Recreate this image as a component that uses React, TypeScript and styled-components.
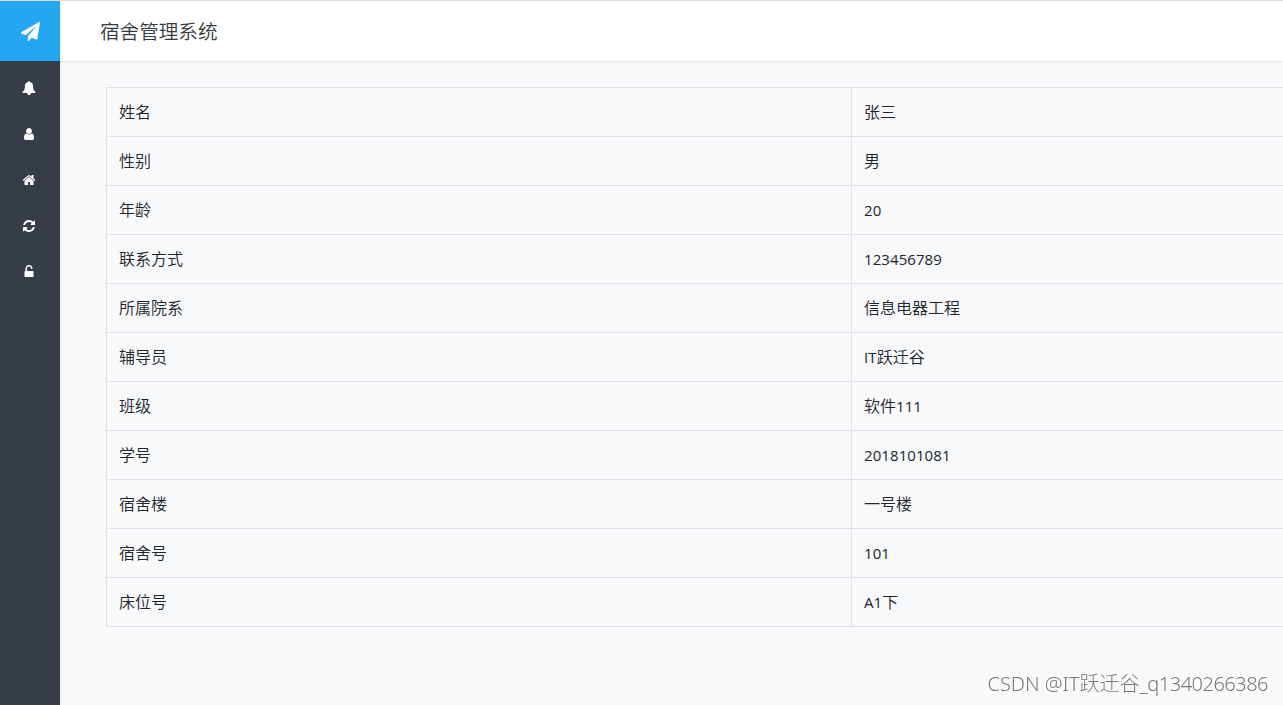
import React from "react";
import styled, { createGlobalStyle } from "styled-components";

const GlobalStyle = createGlobalStyle`
  *, *::before, *::after { box-sizing: border-box; }
  html, body { margin: 0; padding: 0; overflow: hidden; }
  body {
    background: #f9f9f9;
    color: #212529;
    font-family: "Noto Sans", "Noto Sans CJK SC", sans-serif;
    font-size: 16px;
    line-height: 24px;
  }
`;

const Page = styled.div`
  display: flex;
  width: 100vw;
  height: 100vh;
  overflow: hidden;
  border-top: 1px solid #dcdce0;
`;

const Sidebar = styled.nav`
  flex: 0 0 60px;
  display: flex;
  flex-direction: column;
  background: #363d47;
`;

const Brand = styled.a`
  flex: 0 0 60px;
  display: flex;
  align-items: center;
  padding: 1px 0 0 21px;
  margin-bottom: 4px;
  background: #23a7f2;
  color: #fff;
`;

const NavItem = styled.a`
  flex: 0 0 46px;
  display: flex;
  align-items: center;
  padding-left: 22px;
  color: #fff;
`;

const Icon = styled.svg<{ $size: number }>`
  display: block;
  width: ${(p) => p.$size}px;
  height: ${(p) => p.$size}px;
  fill: currentColor;
`;

const Main = styled.main`
  flex: 1;
  min-width: 0;
  display: flex;
  flex-direction: column;
  box-shadow: inset 2px 0 2px -1px #ededed;
`;

const Header = styled.header`
  position: relative;
  flex: 0 0 60px;
  display: flex;
  align-items: center;
  padding: 2px 0 0 40px;
  background: #fff;
  box-shadow: 0 1px 2px rgba(0, 0, 0, 0.1);
`;

const Title = styled.h1`
  margin: 0;
  font-size: 19.6px;
  font-weight: 350;
  line-height: 28px;
  color: #343a40;
`;

const Content = styled.section`
  flex: 0 0 611px;
  margin-left: 38px;
  padding: 26px 0 0 8px;
  background: #f8f9fb;
`;

const Table = styled.table`
  width: 1491px;
  table-layout: fixed;
  border-collapse: collapse;
`;

const Cell = styled.td`
  height: 49px;
  padding: 12px;
  border: 1px solid #dee2e6;
  font-weight: 350;
  white-space: nowrap;
`;

const Latin = styled.span`
  font-family: "Open Sans", "Noto Sans", sans-serif;
  font-size: 15px;
  font-weight: 400;
  letter-spacing: 0.08px;
`;

const Watermark = styled.div`
  position: fixed;
  right: 15px;
  bottom: 6px;
  font-size: 20px;
  line-height: 30px;
  font-weight: 300;
  white-space: nowrap;
  color: #777;
  text-shadow: -1px -1px 0 #fff;
`;

const WatermarkId = styled.span`
  letter-spacing: -0.5px;
`;

const PLANE =
  "M1764 11q33 24 27 64l-256 1536q-5 29-32 45-14 8-31 8-11 0-24-5l-453-185-242 295q-18 23-49 23-13 0-22-4-19-7-30.500-23.500t-11.500-36.500v-349l864-1059-1069 925-395-162q-37-14-40-55-2-40 32-59l1664-960q15-9 32-9 20 0 36 11z";

const NAV = [
  {
    name: "bell",
    path: "M912 1696q0-16-16-16-59 0-101.500-42.500t-42.500-101.500q0-16-16-16t-16 16q0 73 51.500 124.500t124.500 51.500q16 0 16-16zm816-288q0 52-38 90t-90 38h-448q0 106-75 181t-181 75-181-75-75-181h-448q-52 0-90-38t-38-90q50-42 91-88t85-119.500 74.500-158.500 50-206 19.500-260q0-152 117-282.500t307-158.500q-8-19-8-39 0-40 28-68t68-28 68 28 28 68q0 20-8 39 190 28 307 158.500t117 282.500q0 139 19.500 260t50 206 74.500 158.500 85 119.500 91 88z",
  },
  {
    name: "user",
    path: "M1536 1399q0 109-62.500 187t-150.500 78h-854q-88 0-150.500-78t-62.500-187q0-85 8.500-160.500t31.500-152 58.500-131 94-89 134.500-34.500q131 128 313 128t313-128q76 0 134.500 34.500t94 89 58.500 131 31.500 152 8.500 160.500zm-256-887q0 159-112.500 271.500t-271.500 112.500-271.500-112.500-112.500-271.500 112.500-271.500 271.500-112.500 271.500 112.500 112.500 271.500z",
  },
  {
    name: "home",
    path: "M1472 992v480q0 26-19 45t-45 19h-384v-384h-256v384h-384q-26 0-45-19t-19-45v-480q0-1 .5-3t.5-3l575-474 575 474q1 2 1 6zm223-69l-62 74q-8 9-21 11h-3q-13 0-21-7l-692-577-692 577q-12 8-24 7-13-2-21-11l-62-74q-8-10-7-23.500t11-21.500l719-599q32-26 76-26t76 26l244 204v-195q0-14 9-23t23-9h192q14 0 23 9t9 23v408l219 182q10 8 11 21.500t-7 23.500z",
  },
  {
    name: "refresh",
    path: "M1639 1056q0 5-1 7-64 268-268 434.500t-478 166.500q-146 0-282.500-55t-243.500-157l-129 129q-19 19-45 19t-45-19-19-45v-448q0-26 19-45t45-19h448q26 0 45 19t19 45-19 45l-137 137q71 66 161 102t187 36q134 0 250-65t186-179q11-17 53-117 8-23 30-23h192q13 0 22.500 9.500t9.500 22.500zm25-800v448q0 26-19 45t-45 19h-448q-26 0-45-19t-19-45 19-45l138-138q-148-137-349-137-134 0-250 65t-186 179q-11 17-53 117-8 23-30 23h-199q-13 0-22.500-9.500t-9.500-22.500v-7q65-268 270-434.500t480-166.500q146 0 284 55.500t245 156.500l130-129q19-19 45-19t45 19 19 45z",
  },
  {
    name: "unlock",
    path: "M1376 768q40 0 68 28t28 68v576q0 40-28 68t-68 28h-960q-40 0-68-28t-28-68v-576q0-40 28-68t68-28h32v-320q0-185 131.500-316.500t316.500-131.500 316.500 131.500 131.500 316.500q0 26-19 45t-45 19h-64q-26 0-45-19t-19-45q0-106-75-181t-181-75-181 75-75 181v320h736z",
  },
];

const ROWS: [string, string][] = [
  ["姓名", "张三"],
  ["性别", "男"],
  ["年龄", "20"],
  ["联系方式", "123456789"],
  ["所属院系", "信息电器工程"],
  ["辅导员", "IT跃迁谷"],
  ["班级", "软件111"],
  ["学号", "2018101081"],
  ["宿舍楼", "一号楼"],
  ["宿舍号", "101"],
  ["床位号", "A1下"],
];

function MixedText({ text }: { text: string }) {
  const parts = text.split(/([A-Za-z0-9]+)/).filter(Boolean);
  return (
    <>
      {parts.map((part, i) =>
        /^[A-Za-z0-9]/.test(part) ? <Latin key={i}>{part}</Latin> : part
      )}
    </>
  );
}

export default function App() {
  return (
    <>
      <GlobalStyle />
      <Page>
        <Sidebar>
          <Brand>
            <Icon $size={19} viewBox="0 0 1792 1792">
              <path d={PLANE} />
            </Icon>
          </Brand>
          {NAV.map((item) => (
            <NavItem key={item.name}>
              <Icon $size={14} viewBox="0 0 1792 1792">
                <path d={item.path} />
              </Icon>
            </NavItem>
          ))}
        </Sidebar>
        <Main>
          <Header>
            <Title>宿舍管理系统</Title>
          </Header>
          <Content>
            <Table>
              <tbody>
                {ROWS.map(([label, value]) => (
                  <tr key={label}>
                    <Cell>{label}</Cell>
                    <Cell>
                      <MixedText text={value} />
                    </Cell>
                  </tr>
                ))}
              </tbody>
            </Table>
          </Content>
        </Main>
      </Page>
      <Watermark>
        CSDN @IT跃迁谷<WatermarkId>_q1340266386</WatermarkId>
      </Watermark>
    </>
  );
}
